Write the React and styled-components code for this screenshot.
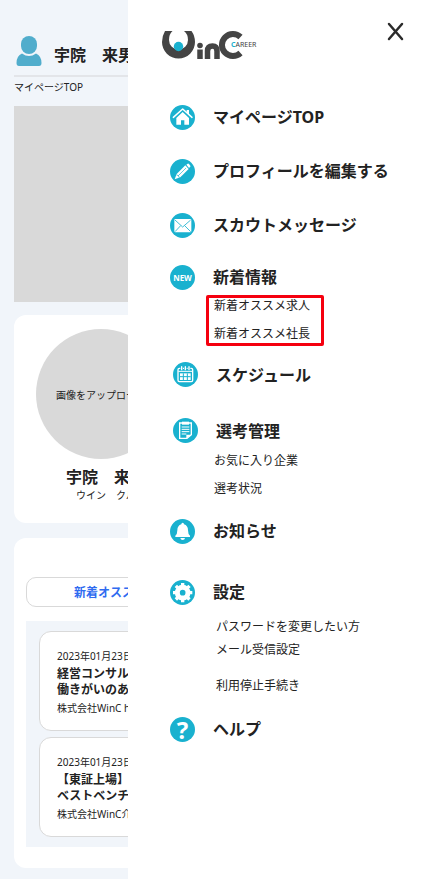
import React from "react";
import styled, { createGlobalStyle } from "styled-components";

const GlobalStyle = createGlobalStyle`
* { box-sizing: border-box; }
body {
    margin: 0;
    background: #f1f5fa;
    color: #222;
    font-family: "Noto Sans", "Noto Sans CJK JP", sans-serif;
}
h1, h2, h3, p, ul { margin: 0; padding: 0; }
ul { list-style: none; }
a { color: inherit; text-decoration: none; }
button { font-family: inherit; cursor: pointer; }
`

const Screen = styled.div`
position: relative;
min-height: 100vh;
overflow: hidden;
`

/* ---- my page ---- */

const Page = styled.main`
display: flex;
flex-direction: column;
padding: 34px 14px 11px;
white-space: nowrap;
`

const UserBar = styled.header`
display: flex;
align-items: center;
gap: 12px;
height: 43px;
padding: 0 0 7px 2px;
border-bottom: 2px solid #e3e5e9;
`

const UserName = styled.h1`
font-size: 16px;
line-height: 24px;
font-weight: bold;
padding-top: 8px;
`

const Crumb = styled.p`
font-size: 10px;
line-height: 20px;
`

const Banner = styled.div`
height: 196px;
margin-top: 9px;
background: #d9d9d9;
`

const Card = styled.section`
background: #fff;
border-radius: 12px;
`

const ProfileCard = styled(Card)`
height: 208px;
margin-top: 13px;
padding: 14px 22px;
`

const Avatar = styled.button`
display: block;
width: 130px;
height: 130px;
padding: 0;
border: none;
border-radius: 50%;
background: #d9d9d9;
color: #222;
font-size: 10px;
`

const ProfileName = styled.h2`
font-size: 16px;
line-height: 24px;
padding: 6px 0 0 30px;
`

const ProfileKana = styled.p`
font-size: 10px;
line-height: 12px;
padding-left: 40px;
`

const NewsCard = styled(Card)`
margin-top: 15px;
padding: 39px 12px 21px;
`

const NewsTab = styled.button`
display: block;
width: 100%;
height: 30px;
padding: 0 47px;
border: 1px solid #d9d9d9;
border-radius: 10px;
background: #fff;
color: #2f6bf0;
font-size: 12px;
font-weight: bold;
text-align: left;
`

const NewsList = styled.div`
display: flex;
flex-direction: column;
gap: 6px;
margin-top: 14px;
padding: 10px 13px;
background: #f1f5fa;
`

const NewsItem = styled.article`
height: 100px;
padding: 16px 17px;
border: 1px solid #d9d9d9;
border-radius: 12px;
background: #fff;
overflow: hidden;
`

const NewsDate = styled.p`
font-size: 10px;
line-height: 16px;
margin-bottom: 2px;
`

const NewsTitle = styled.h3`
font-size: 12px;
line-height: 16px;
`

const NewsCompany = styled.p`
font-size: 10px;
line-height: 20px;
`

/* ---- drawer, lies over the page ---- */

const Drawer = styled.aside`
position: absolute;
top: 0;
bottom: 0;
left: 128px;
right: 0;
background: #fff;
`

const DrawerHeader = styled.div`
display: flex;
justify-content: space-between;
align-items: flex-start;
height: 105px;
padding: 22px 24px 0 34px;
`

const Logo = styled.svg`
width: 98px;
height: 28px;
margin-top: 9px;
`

const CloseButton = styled.button`
display: flex;
padding: 0;
border: none;
background: none;
`

const Menu = styled.nav`
padding-left: 42px;
`

const Group = styled.div`
margin-bottom: ${(props) => props.$space}px;
`

const MenuLink = styled.a`
display: flex;
align-items: center;
gap: 18px;
height: 25px;
padding-left: ${(props) => (props.$inset ? 3 : 0)}px;
font-size: 16px;
line-height: 24px;
font-weight: bold;
`

const MenuLabel = styled.span`
padding-bottom: ${(props) => (props.$inset ? 0 : 2)}px;
`

const Badge = styled.span`
display: flex;
flex: none;
align-items: center;
justify-content: center;
width: 25px;
height: 25px;
border-radius: 50%;
background: #19b1cf;
color: #fff;
font-size: ${(props) => props.$size || 16}px;
line-height: 25px;

& svg {
    width: 25px;
    height: 25px;
}
`

const SubMenu = styled.ul`
display: flex;
flex-direction: column;
gap: 14px;
width: fit-content;
margin-top: 11px;
padding-left: 44px;
font-size: 12px;
line-height: 14px;
`

const MarkedSubMenu = styled(SubMenu)`
margin: 5px 0 0 36px;
padding: 1px 11px 2px 5px;
border: 3px solid #f5000f;
border-radius: 2px;
`

const SettingsSubMenu = styled(SubMenu)`
gap: 9px;
margin-top: 15px;
padding-left: 46px;

& li:last-child {
    margin-top: 13px;
}
`

const UserIcon = () => (
    <svg width="26" height="30" viewBox="0 0 26 30" fill="#51adcc" aria-hidden="true">
        <rect x="5" y="0" width="16" height="18" rx="8" />
        <path d="M6 17.5 Q13 22.5 20 17.5 Q25.5 20 25.5 27 Q25.5 30 23 30 H3 Q.5 30 .5 27 Q.5 20 6 17.5Z" />
    </svg>
)

const HomeIcon = () => (
    <svg viewBox="0 0 75 75" aria-hidden="true">
        <path d="M50 15H57V30L50 24Z" fill="#fff" />
        <path d="M10 37L38 12L66 37" fill="none" stroke="#fff" strokeWidth="4.5" strokeLinecap="round" strokeLinejoin="round" />
        <path d="M38 21L57 39V59H43V46H33V59H19V39Z" fill="#fff" />
    </svg>
)

const PencilIcon = () => (
    <svg viewBox="0 0 75 75" fill="#fff" aria-hidden="true">
        <path d="M49 17L53 14Q55 13 57 15L61 20Q62 22 60 24L57 27Z" />
        <path d="M46 19L56 30L31 55L14 61L20 45Z" />
        <path d="M48 27L24 51" stroke="#19b1cf" strokeWidth="2" />
        <path d="M20 48Q26 48 28 56" fill="none" stroke="#19b1cf" strokeWidth="2" />
    </svg>
)

const MailIcon = () => (
    <svg viewBox="0 0 75 75" aria-hidden="true">
        <rect x="13" y="18" width="51" height="40" rx="3" fill="#fff" />
        <path d="M15 21L38 42L62 21M15 56L32 38M62 56L44 38" fill="none" stroke="#19b1cf" strokeWidth="2.5" />
    </svg>
)

const CalendarIcon = () => (
    <svg viewBox="0 0 75 75" fill="none" stroke="#fff" aria-hidden="true">
        <rect x="15" y="19" width="44" height="40" rx="4" strokeWidth="4" />
        <path d="M16 28H58" strokeWidth="3" />
        <path d="M26 14V24M37 14V24M48 14V24" stroke="#19b1cf" strokeWidth="8" />
        <path d="M26 14V23M37 14V23M48 14V23" strokeWidth="4" strokeLinecap="round" />
        <rect x="21" y="34" width="32" height="20" fill="#fff" stroke="none" />
        <path d="M31 34V54M43 34V54M21 44H53" stroke="#19b1cf" strokeWidth="3" />
    </svg>
)

const ClipboardIcon = () => (
    <svg viewBox="0 0 75 75" fill="none" stroke="#fff" aria-hidden="true">
        <path d="M28 15H20V61H42L55 50V15H47" strokeWidth="4" />
        <path d="M27 11H48V20H27Z" fill="#fff" stroke="none" />
        <path d="M26 27H49M26 34H49M26 41H49M26 48H40" strokeWidth="3" />
        <path d="M40 61V50H55Z" fill="#fff" stroke="none" />
    </svg>
)

const BellIcon = () => (
    <svg viewBox="0 0 75 75" fill="#fff" aria-hidden="true">
        <path d="M38 11Q42 11 42 16Q54 20 54 34Q54 46 60 50V54H16V50Q22 46 22 34Q22 20 34 16Q34 11 38 11Z" />
        <path d="M31 57H45Q44 63 38 63Q32 63 31 57Z" />
    </svg>
)

const GearIcon = () => (
    <svg viewBox="0 0 75 75" fill="none" stroke="#fff" aria-hidden="true">
        <circle cx="38" cy="38" r="16" strokeWidth="15" />
        <path
            d="M38 9V19M38 57V67M9 38H19M57 38H67M17.5 17.5L25 25M51 51L58.5 58.5M17.5 58.5L25 51M51 25L58.5 17.5"
            strokeWidth="10"
        />
    </svg>
)

const CloseIcon = () => (
    <svg width="17" height="19" viewBox="0 0 17 19" fill="none" stroke="#2b2b2b" strokeWidth="2.500" strokeLinecap="round" aria-hidden="true">
        <path d="M2 2L15 17M15 2L2 17" />
    </svg>
)

const CompanyLogo = () => (
    <Logo viewBox="0 0 98 28" role="img" aria-label="WinC CAREER">
        <path
            d="M3 0H10.5Q7 3 7 9A9.500 9.500 0 0 0 26 9Q26 3 22 0H29.500Q33 5 33 11A16.500 16.500 0 0 1 0 11Q0 5 3 0Z"
            fill="#444"
        />
        <circle cx="16.500" cy="15.500" r="4.700" fill="#19b1cf" />
        <circle cx="38" cy="14.500" r="2.800" fill="#444" />
        <path d="M38 18.500V28" stroke="#444" strokeWidth="5.500" />
        <path d="M45.500 28V20Q45.500 15 50.500 15Q55 15 55 20V28" fill="none" stroke="#444" strokeWidth="5.500" />
        <path d="M78.500 6A11 11 0 1 0 78.500 22" fill="none" stroke="#444" strokeWidth="6" />
        <text x="69" y="16" fontFamily="Noto Sans, sans-serif" fontSize="7" fill="#444">
            <tspan fill="#19b1cf" fontWeight="bold">C</tspan>AREER
        </text>
    </Logo>
)

const MenuItem = (props) => {
    const { icon, label, inset, size, space, children } = props;
    return (
        <Group $space={space}>
            <MenuLink href="#" $inset={inset}>
                <Badge $size={size}>{icon}</Badge>
                <MenuLabel $inset={inset}>{label}</MenuLabel>
            </MenuLink>
            {children}
        </Group>
    )
}

const SubLink = ({ children }) => (
    <li><a href="#">{children}</a></li>
)

const news = [
    { date: "2023年01月23日", title: ["経営コンサル", "働きがいのあ"], company: "株式会社WinC ho" },
    { date: "2023年01月23日", title: ["【東証上場】", "ベストベンチ"], company: "株式会社WinC介" },
]

const App = () => {
    return (
        <Screen>
            <GlobalStyle />
            <Page>
                <UserBar>
                    <UserIcon />
                    <UserName>宇院　来男</UserName>
                </UserBar>
                <Crumb>マイページTOP</Crumb>
                <Banner />
                <ProfileCard>
                    <Avatar type="button">画像をアップロード</Avatar>
                    <ProfileName>宇院　来男</ProfileName>
                    <ProfileKana>ウイン　クルオ</ProfileKana>
                </ProfileCard>
                <NewsCard>
                    <NewsTab type="button">新着オススメ</NewsTab>
                    <NewsList>
                        {news.map((item) => (
                            <NewsItem key={item.company}>
                                <NewsDate>{item.date}</NewsDate>
                                {item.title.map((line) => <NewsTitle key={line}>{line}</NewsTitle>)}
                                <NewsCompany>{item.company}</NewsCompany>
                            </NewsItem>
                        ))}
                    </NewsList>
                </NewsCard>
            </Page>

            <Drawer>
                <DrawerHeader>
                    <CompanyLogo />
                    <CloseButton type="button" aria-label="閉じる"><CloseIcon /></CloseButton>
                </DrawerHeader>
                <Menu>
                    <MenuItem icon={<HomeIcon />} label="マイページTOP" space={29} />
                    <MenuItem icon={<PencilIcon />} label="プロフィールを編集する" space={29} />
                    <MenuItem icon={<MailIcon />} label="スカウトメッセージ" space={27} />
                    <MenuItem icon="NEW" size={8} label="新着情報" space={16}>
                        <MarkedSubMenu>
                            <SubLink>新着オススメ求人</SubLink>
                            <SubLink>新着オススメ社長</SubLink>
                        </MarkedSubMenu>
                    </MenuItem>
                    <MenuItem icon={<CalendarIcon />} label="スケジュール" inset space={31} />
                    <MenuItem icon={<ClipboardIcon />} label="選考管理" inset space={23}>
                        <SubMenu>
                            <SubLink>お気に入り企業</SubLink>
                            <SubLink>選考状況</SubLink>
                        </SubMenu>
                    </MenuItem>
                    <MenuItem icon={<BellIcon />} label="お知らせ" space={36} />
                    <MenuItem icon={<GearIcon />} label="設定" space={24}>
                        <SettingsSubMenu>
                            <SubLink>パスワードを変更したい方</SubLink>
                            <SubLink>メール受信設定</SubLink>
                            <SubLink>利用停止手続き</SubLink>
                        </SettingsSubMenu>
                    </MenuItem>
                    <MenuItem icon="?" size={24} label="ヘルプ" space={0} />
                </Menu>
            </Drawer>
        </Screen>
    )
}

export default App;
